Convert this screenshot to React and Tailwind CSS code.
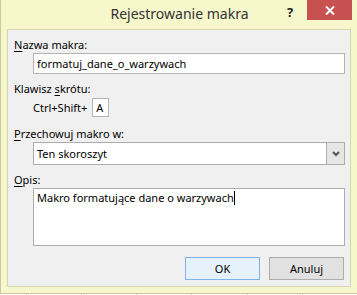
import React from "react";

const font = { fontFamily: '"Noto Sans", "Open Sans", sans-serif' };

const Label = ({ k, rest, className = "" }) => (
  <div className={`text-[11px] leading-[16px] text-black ${className}`}>
    <span className="underline underline-offset-2">{k}</span>
    {rest}
  </div>
);

export default function App() {
  return (
    <div className="w-[357px] h-[295px] overflow-hidden bg-white" style={font}>
      <div className="w-[360px] h-[294px] bg-[#f6f7cb] border-l border-b border-[#c9c9a4] flex flex-col">
        {/* title bar */}
        <div className="h-[29px] flex items-start justify-end relative">
          <div className="absolute left-0 top-0 w-[357px] text-center text-[14px] leading-[20px] pt-[4px] text-[#333]">
            Rejestrowanie makra
          </div>
          <div className="relative w-[14px] text-[13px] font-bold text-[#222] pt-[4px] mr-[6px] leading-[16px]">?</div>
          <div className="relative w-[45px] h-[20px] bg-[#c75050] flex items-center justify-center mr-[8px]">
            <svg width="10" height="9" viewBox="0 0 10 9">
              <path d="M1 0.5 L9 8.5 M9 0.5 L1 8.5" stroke="white" strokeWidth="2" />
            </svg>
          </div>
        </div>
        {/* client area */}
        <div className="ml-[6px] w-[344px] h-[258px] bg-[#f0f0f0] border border-[#d6d6b0] pl-[6px] pt-[7px]">
          <Label k="N" rest="azwa makra:" />
          <div className="ml-[19px] w-[312px] h-[21px] bg-white border border-[#b4b4b4] text-[11px] leading-[19px] pl-[3px] text-black">
            formatuj_dane_o_warzywach
          </div>
          <div className="mt-[7px] text-[11px] leading-[16px] text-black">
            Klawisz <span className="underline underline-offset-2">s</span>krótu:
          </div>
          <div className="ml-[19px] mt-[1px] flex items-center gap-[5px]">
            <span className="text-[11px] leading-[16px]">Ctrl+Shift+</span>
            <div className="w-[17px] h-[19px] bg-white border border-[#b4b4b4] text-[11px] leading-[17px] pl-[3px]">
              A
            </div>
          </div>
          <Label className="mt-[9px]" k="P" rest="rzechowuj makro w:" />
          <div className="ml-[19px] w-[312px] h-[23px] bg-white border border-[#acacac] flex">
            <div className="flex-1 text-[11px] leading-[21px] pl-[3px]">Ten skoroszyt</div>
            <div className="w-[18px] h-full bg-[#e6e6e6] border-l border-[#acacac] flex items-center justify-center">
              <svg width="8" height="6" viewBox="0 0 8 6">
                <path d="M1 1 L4 4 L7 1" stroke="#555" strokeWidth="2" fill="none" />
              </svg>
            </div>
          </div>
          <Label className="mt-[7px]" k="O" rest="pis:" />
          <div className="ml-[19px] w-[312px] h-[58px] bg-white border border-[#abadb3] text-[11px] leading-[16px] pl-[3px] pt-[1px]">
            Makro formatujące dane o warzywach
            <span className="inline-block w-px h-[14px] bg-black align-[-3px]" />
          </div>
          <div className="flex justify-end gap-[9px] mt-[11px] pr-[6px]">
            <button className="w-[75px] h-[23px] bg-[#e5f1fb] border border-[#7eb4ea] text-[11px] leading-[21px] text-black">
              OK
            </button>
            <button className="w-[75px] h-[23px] bg-[#e1e1e1] border border-[#adadad] text-[11px] leading-[21px] text-black">
              Anuluj
            </button>
          </div>
        </div>
      </div>
      <div className="flex h-[1px]">
        <div className="w-[30px]" />
        {[0, 1, 2, 3, 4, 5].map((i) => (
          <div key={i} className="w-[64px] border-l border-[#d4d4d4]" />
        ))}
      </div>
    </div>
  );
}
